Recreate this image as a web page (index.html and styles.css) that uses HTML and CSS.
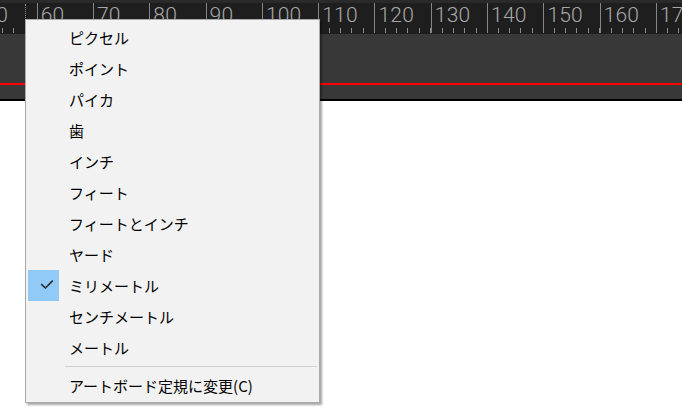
FILE: index.html
```html
<!DOCTYPE html>
<html lang="ja">
<head>
<meta charset="utf-8">
<title>Units menu</title>
<link rel="stylesheet" href="styles.css">
</head>
<body>
<div class="app">
  <div class="ruler">
    <div class="ticks">
      <div class="seg"><span>50</span></div>
      <div class="seg"><span>60</span></div>
      <div class="seg"><span>70</span></div>
      <div class="seg"><span>80</span></div>
      <div class="seg"><span>90</span></div>
      <div class="seg"><span>100</span></div>
      <div class="seg"><span>110</span></div>
      <div class="seg"><span>120</span></div>
      <div class="seg"><span>130</span></div>
      <div class="seg"><span>140</span></div>
      <div class="seg"><span>150</span></div>
      <div class="seg"><span>160</span></div>
      <div class="seg"><span>170</span></div>
      <div class="seg"><span>180</span></div>
    </div>
    <div class="marker"></div>
  </div>
  <div class="panel">
    <div class="redline"></div>
  </div>
  <div class="canvas"></div>

  <div class="menu">
    <div class="item"><span class="icon"></span><span class="label">ピクセル</span></div>
    <div class="item"><span class="icon"></span><span class="label">ポイント</span></div>
    <div class="item"><span class="icon"></span><span class="label">パイカ</span></div>
    <div class="item"><span class="icon"></span><span class="label">歯</span></div>
    <div class="item"><span class="icon"></span><span class="label">インチ</span></div>
    <div class="item"><span class="icon"></span><span class="label">フィート</span></div>
    <div class="item"><span class="icon"></span><span class="label">フィートとインチ</span></div>
    <div class="item"><span class="icon"></span><span class="label">ヤード</span></div>
    <div class="item"><span class="icon checked"><svg width="31" height="31" viewBox="0 0 31 31"><path d="M13.8 14.6 L17.4 18 L24.2 11.2" fill="none" stroke="#2b2b2b" stroke-width="1.6" stroke-linecap="square"/></svg></span><span class="label">ミリメートル</span></div>
    <div class="item"><span class="icon"></span><span class="label">センチメートル</span></div>
    <div class="item"><span class="icon"></span><span class="label">メートル</span></div>
    <div class="sep"></div>
    <div class="item"><span class="icon"></span><span class="label">アートボード定規に変更(C)</span></div>
  </div>
</div>
</body>
</html>
```

FILE: styles.css
```css
html, body {
  margin: 0;
  padding: 0;
}
body {
  width: 682px;
  height: 413px;
  overflow: hidden;
  background: #ffffff;
}
.app {
  position: relative;
  width: 682px;
  height: 413px;
  display: flex;
  flex-direction: column;
}
.ruler {
  position: relative;
  height: 31px;
  border-top: 3px solid #2a2a2a;
  background: #1e1e1e;
  overflow: hidden;
  flex: 0 0 auto;
}
.ticks {
  display: flex;
  margin-left: -19.6px;
  height: 30px;
}
.seg {
  flex: 0 0 56.3px;
  box-sizing: border-box;
  height: 30px;
  border-left: 1px solid #858585;
  background-image: repeating-linear-gradient(to right, transparent 0 9.76px, #8a8a8a 9.76px 10.76px, transparent 10.76px 11.26px);
  background-size: 100% 5px;
  background-position: left bottom;
  background-repeat: no-repeat;
}
.seg span {
  display: block;
  padding: 2px 0 0 3px;
  font-family: Roboto, "Liberation Sans", sans-serif;
  font-weight: 300;
  font-size: 21px;
  line-height: 21px;
  color: #a8a8a8;
  letter-spacing: 0.2px;
}
.marker {
  position: absolute;
  left: 25px;
  top: 1px;
  height: 14px;
  border-left: 1px dotted #8a8a8a;
}
.panel {
  padding-top: 49px;
  box-sizing: content-box;
  height: 16px;
  background: #383838;
  border-bottom: 2px solid #000000;
  flex: 0 0 auto;
}
.redline {
  height: 2px;
  background: #ff0000;
}
.canvas {
  flex: 1 1 auto;
  background: #ffffff;
}
.menu {
  position: absolute;
  left: 25px;
  top: 19px;
  width: 293px;
  padding: 2px 0 1px 0;
  background: #f2f2f2;
  border: 1px solid #a9a9a9;
  box-shadow: 2px 2px 2px rgba(0, 0, 0, 0.35);
  font-family: "Noto Sans CJK JP", "Noto Sans", sans-serif;
  font-size: 15px;
  color: #000000;
}
.item {
  display: flex;
  align-items: center;
  height: 31px;
  padding-left: 2px;
}
.icon {
  flex: 0 0 31px;
  width: 31px;
  height: 31px;
  display: flex;
}
.icon.checked {
  background: #91c9f7;
}
.label {
  padding-left: 10px;
  line-height: 31px;
  white-space: nowrap;
}
.sep {
  height: 1px;
  margin: 3px 2px 3px 39px;
  background: #cfcfcf;
}
```
